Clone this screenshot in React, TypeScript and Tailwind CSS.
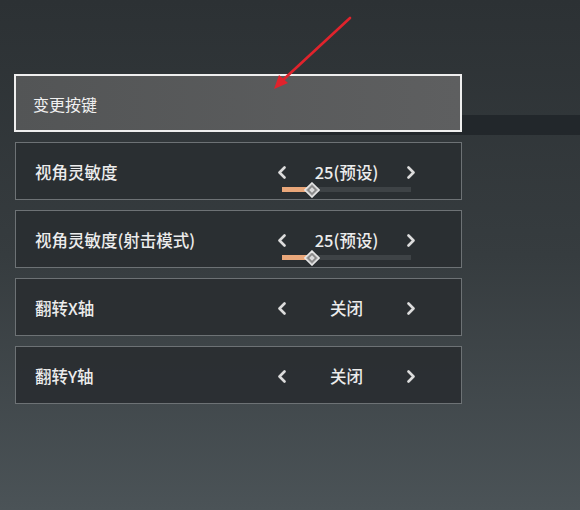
import React from 'react';

type Row = { label: string; value: string; slider?: number };

const rows: Row[] = [
  { label: '视角灵敏度', value: '25(预设)', slider: 30 },
  { label: '视角灵敏度(射击模式)', value: '25(预设)', slider: 30 },
  { label: '翻转X轴', value: '关闭' },
  { label: '翻转Y轴', value: '关闭' },
];

const font = "font-['Noto_Sans_CJK_SC','Noto_Sans',sans-serif]";

function Chevron({ dir }: { dir: 'left' | 'right' }) {
  return (
    <svg width="11" height="13" viewBox="0 0 11 13" className="shrink-0">
      <path
        d={dir === 'left' ? 'M7.5 1.5 L2.5 6.5 L7.5 11.5' : 'M3.5 1.5 L8.5 6.5 L3.5 11.5'}
        fill="none"
        stroke="#dcdcdc"
        strokeWidth="2.6"
        strokeLinecap="round"
        strokeLinejoin="round"
      />
    </svg>
  );
}

function Slider({ fill }: { fill: number }) {
  return (
    <div className="relative mx-[5px] mt-[3px] h-[5px] bg-[#3e4346]">
      <div className="h-full bg-[#e9a77a]" style={{ width: fill }} />
      {/* thumb */}
      <svg
        width="16"
        height="16"
        viewBox="0 0 16 16"
        className="absolute top-1/2 -translate-y-1/2 -translate-x-1/2"
        style={{ left: fill }}
      >
        <polygon points="8,1 15,8 8,15 1,8" fill="#9a9a9a" stroke="#e6e6e6" strokeWidth="1.6" />
        <polygon points="8,4.5 11.5,8 8,11.5 4.5,8" fill="#d8d8d8" stroke="#5a5a5a" strokeWidth="0.8" />
      </svg>
    </div>
  );
}

export default function App() {
  return (
    <div className={`relative w-[580px] h-[510px] overflow-hidden bg-gradient-to-b from-[#2c3134] via-[#363c3f] to-[#4b5357] ${font}`}>
      {/* dark band behind the focused row */}
      <div className="absolute left-[300px] right-0 top-[115px] h-[20px] bg-[#21262a]/90" />

      <div className="relative flex flex-col gap-[10px] pl-[14px] pt-[74px] w-[462px]">
        {/* focused row */}
        <div className="h-[58px] border-2 border-[#efefef] bg-gradient-to-r from-[#535556] to-[#5e5f60] flex items-center pl-[17px] pt-px">
          <span className="text-[16px] leading-6 text-[#f0f0f0]">变更按键</span>
        </div>

        {rows.map(r => (
          <div
            key={r.label}
            className="ml-px h-[58px] border border-[#6d7275] bg-[#2a2e32]/95 flex items-start pt-[17px]"
          >
            <span className="flex-1 pl-[19px] text-[16.5px] leading-6 font-medium text-[#ececec]">
              {r.label}
            </span>
            <div className="w-[139px] mr-[45px] flex flex-col">
              <div className="flex items-center justify-between h-6">
                <Chevron dir="left" />
                <span className="text-[16.5px] leading-6 font-medium text-[#ececec]">{r.value}</span>
                <Chevron dir="right" />
              </div>
              {r.slider !== undefined && <Slider fill={r.slider} />}
            </div>
          </div>
        ))}
      </div>

      {/* red annotation arrow */}
      <svg className="absolute inset-0" width="580" height="510" viewBox="0 0 580 510">
        <line x1="350" y1="18" x2="283" y2="80" stroke="#e0232c" strokeWidth="2.6" strokeLinecap="round" />
        <polygon points="274,89 279,75 288,83" fill="#e0232c" />
      </svg>
    </div>
  );
}
